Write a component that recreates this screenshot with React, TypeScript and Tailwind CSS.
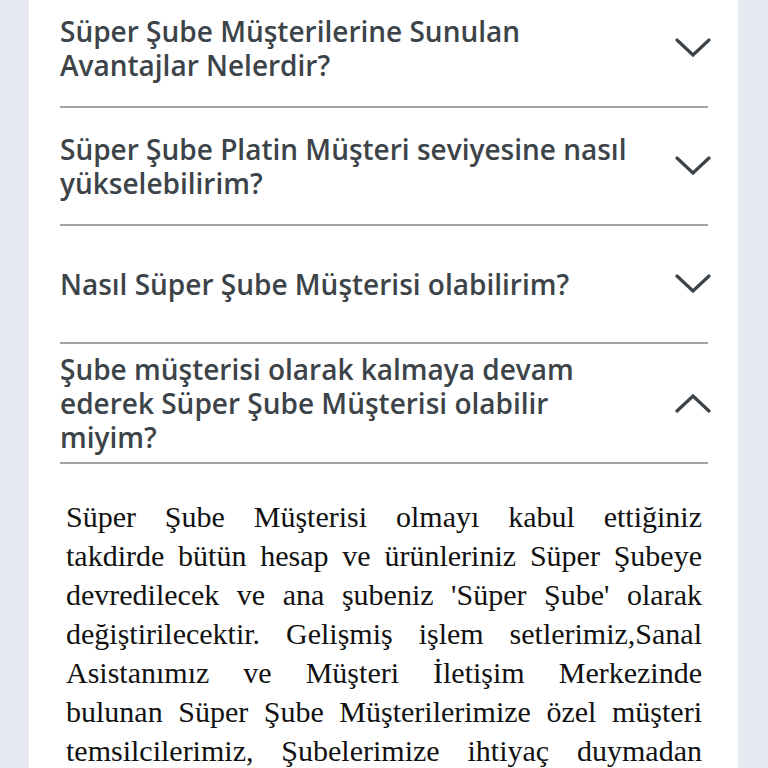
import React from "react";

type Item = { q: string[]; open?: boolean };

const items: Item[] = [
  { q: ["Süper Şube Müşterilerine Sunulan", "Avantajlar Nelerdir?"] },
  { q: ["Süper Şube Platin Müşteri seviyesine nasıl", "yükselebilirim?"] },
  { q: ["Nasıl Süper Şube Müşterisi olabilirim?"] },
  {
    q: [
      "Şube müşterisi olarak kalmaya devam",
      "ederek Süper Şube Müşterisi olabilir",
      "miyim?",
    ],
    open: true,
  },
];

// answer lines as laid out in the app (justified)
const answer = [
  "Süper Şube Müşterisi olmayı kabul ettiğiniz",
  "takdirde bütün hesap ve ürünleriniz Süper Şubeye",
  "devredilecek ve ana şubeniz 'Süper Şube' olarak",
  "değiştirilecektir. Gelişmiş işlem setlerimiz,Sanal",
  "Asistanımız ve Müşteri İletişim Merkezinde",
  "bulunan Süper Şube Müşterilerimize özel müşteri",
  "temsilcilerimiz, Şubelerimize ihtiyaç duymadan",
];

const Chevron: React.FC<{ up?: boolean }> = ({ up }) => (
  <svg width="36" height="20" viewBox="0 0 36 20" className="shrink-0">
    <path
      d={up ? "M2 18 L18 3 L34 18" : "M2 2 L18 17 L34 2"}
      fill="none"
      stroke="#3d4449"
      strokeWidth="3.2"
      strokeLinecap="round"
    />
  </svg>
);

const App: React.FC = () => {
  return (
    <div className="w-[768px] h-[768px] overflow-hidden bg-[#e6eaf0] flex">
      <div className="ml-[29px] w-[709px] bg-white pr-[30px] pl-[31px]">
        <div className="-mt-[10px]">
          {items.map((it, i) => (
            <div
              key={i}
              className="flex items-center justify-between min-h-[118px] py-2 border-b-2 border-[#a3a3a3]"
            >
              <h3 className="font-['Open_Sans',sans-serif] font-semibold text-[28px] leading-[34px] text-[#3d4449]">
                {it.q.map((l, j) => (
                  <span key={j} className="block whitespace-nowrap">
                    {l}
                  </span>
                ))}
              </h3>
              <div className="-mr-[3px]">
                <Chevron up={it.open} />
              </div>
            </div>
          ))}
        </div>
        <div className="px-[6px] pt-[33px] font-['Liberation_Serif',serif] text-[30px] leading-[39px] text-[#111]">
          {answer.map((l, i) => (
            <p
              key={i}
              className="text-justify [text-align-last:justify] whitespace-nowrap"
            >
              {l}
            </p>
          ))}
        </div>
      </div>
    </div>
  );
};

export default App;
